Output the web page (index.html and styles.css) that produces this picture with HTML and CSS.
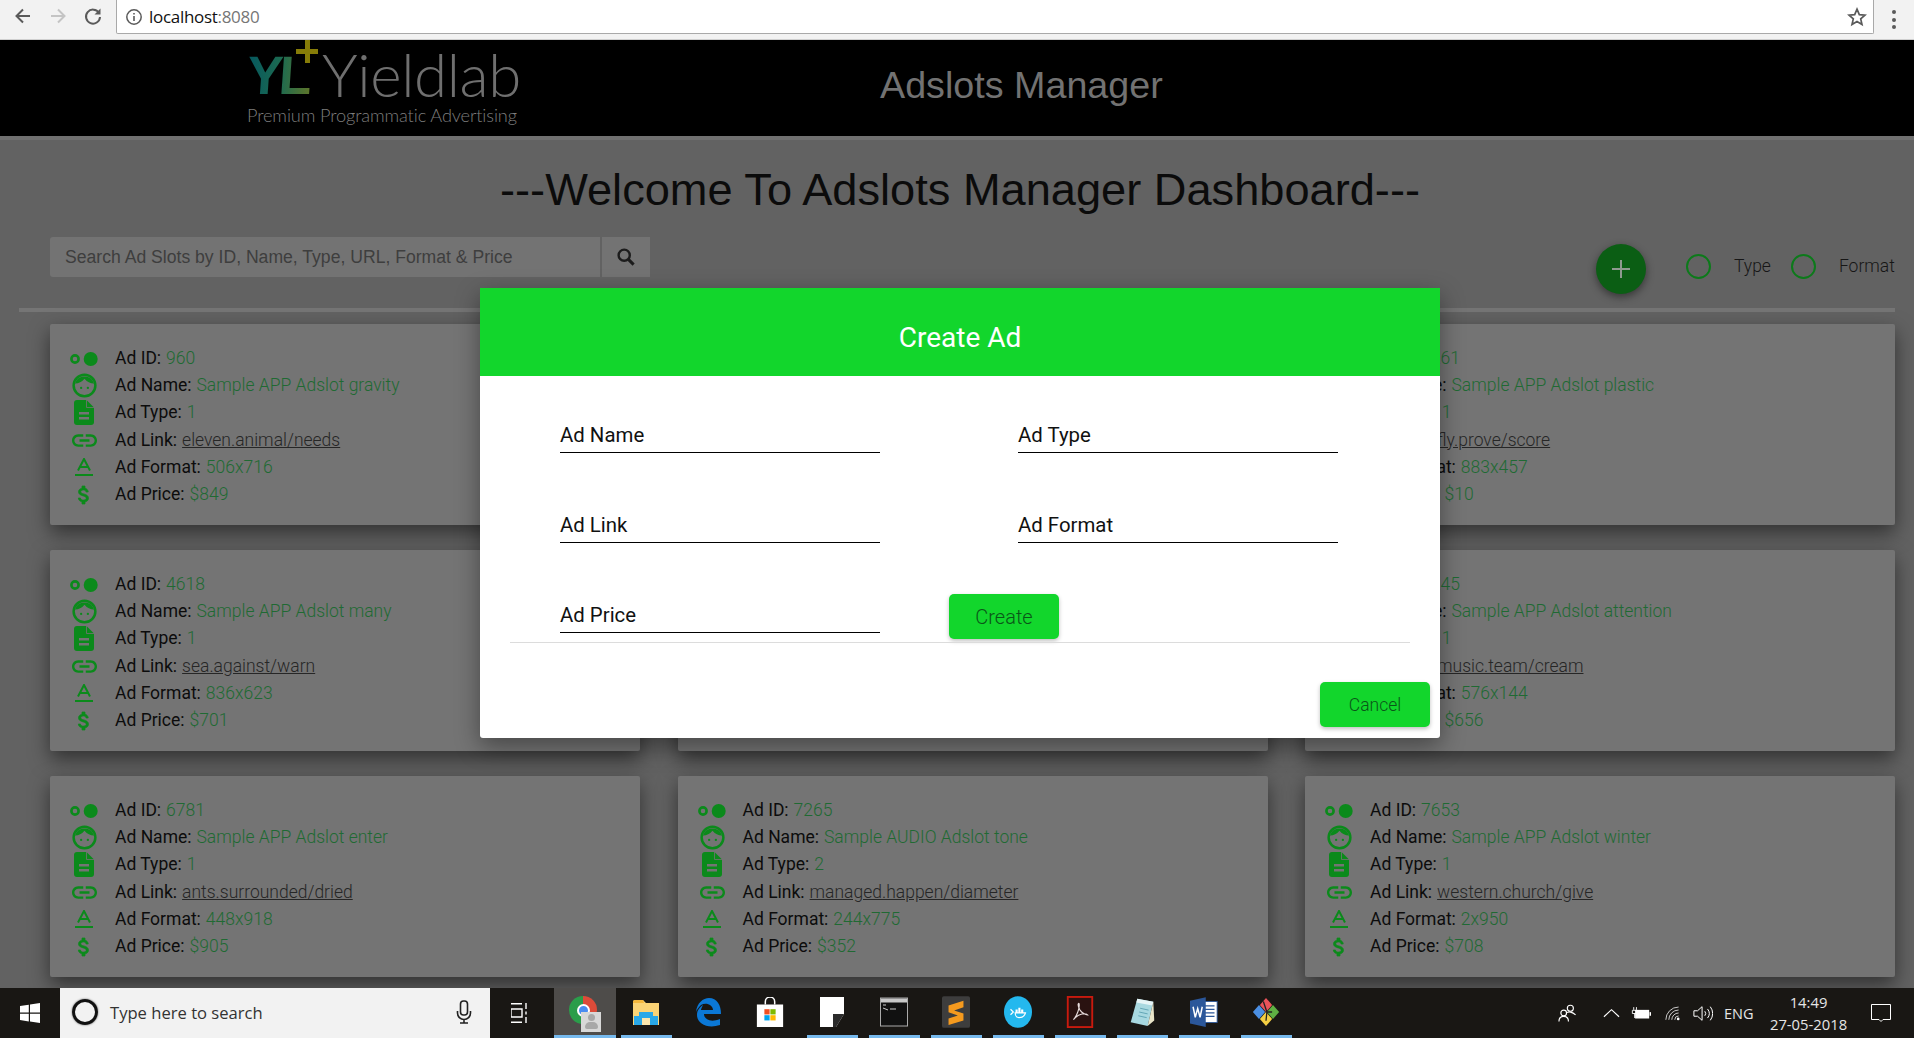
FILE: index.html
```html
<!DOCTYPE html>
<html lang="en">
<head>
<meta charset="utf-8">
<title>Adslots Manager</title>
<link rel="stylesheet" href="styles.css">
</head>
<body>
<svg class="sprite" aria-hidden="true">
  <symbol id="i-id" viewBox="0 0 28 14"><circle cx="5" cy="7" r="3.6" fill="none" stroke="currentColor" stroke-width="2.6"/><circle cx="20.7" cy="7" r="7" fill="currentColor"/></symbol>
  <symbol id="i-face" viewBox="0 0 26 26"><circle cx="13" cy="13" r="11.3" fill="none" stroke="currentColor" stroke-width="2.6"/><path d="M3 11A10.5 10.5 0 0 1 23 11Q17 11 13 6Q9 11 3 11z" fill="currentColor"/><circle cx="9.5" cy="15.5" r="1.2" fill="currentColor"/><circle cx="16.5" cy="15.5" r="1.2" fill="currentColor"/></symbol>
  <symbol id="i-file" viewBox="0 0 20 25"><path d="M3 0H12.5L20 7.5V22a3 3 0 0 1-3 3H3a3 3 0 0 1-3-3V3a3 3 0 0 1 3-3z" fill="currentColor"/><path d="M12.5 0V7.5H20" fill="none" stroke="#747474" stroke-width=".8"/><path d="M5 13.2H15M5 18.2H15" stroke="#747474" stroke-width="2.4"/></symbol>
  <symbol id="i-link" viewBox="2 6 20 12"><path fill="currentColor" d="M3.9 12c0-1.71 1.39-3.1 3.1-3.1h4V7H7c-2.76 0-5 2.24-5 5s2.24 5 5 5h4v-1.9H7c-1.71 0-3.1-1.39-3.1-3.1zM8 13h8v-2H8v2zm9-6h-4v1.9h4c1.71 0 3.1 1.39 3.1 3.1s-1.39 3.1-3.1 3.1h-4V17h4c2.76 0 5-2.24 5-5s-2.24-5-5-5z"/></symbol>
  <symbol id="i-format" viewBox="0 0 18 18"><path d="M3 12.5L9 1L15 12.5M5 9H13" fill="none" stroke="currentColor" stroke-width="2"/><path d="M0 17H18" stroke="currentColor" stroke-width="2"/></symbol>
  <symbol id="i-price" viewBox="5 2 14 20"><path fill="currentColor" stroke="currentColor" stroke-width=".7" d="M11.8 10.9c-2.27-.59-3-1.2-3-2.15 0-1.09 1.01-1.85 2.7-1.85 1.78 0 2.44.85 2.5 2.1h2.21c-.07-1.72-1.12-3.3-3.21-3.81V3h-3v2.16c-1.94.42-3.5 1.68-3.5 3.61 0 2.31 1.91 3.46 4.7 4.13 2.5.6 3 1.48 3 2.41 0 .69-.49 1.79-2.7 1.79-2.06 0-2.87-.92-2.98-2.1h-2.2c.12 2.19 1.76 3.42 3.68 3.83V21h3v-2.15c1.95-.37 3.5-1.5 3.5-3.55 0-2.84-2.43-3.81-4.7-4.4z"/></symbol>
</svg>

<div class="browser">
  <div class="nav-icons">
    <svg class="nav-icon" viewBox="0 0 20 20"><path d="M17 10H4M10 3.5L3.5 10L10 16.5" fill="none" stroke="#5a5a5a" stroke-width="2"/></svg>
    <svg class="nav-icon" viewBox="0 0 20 20"><path d="M3 10H16M10 3.5L16.5 10L10 16.5" fill="none" stroke="#c4c4c4" stroke-width="2"/></svg>
    <svg class="nav-icon" viewBox="0 0 20 20"><path d="M16 7A7 7 0 1 0 17 11" fill="none" stroke="#5a5a5a" stroke-width="2"/><path d="M17.5 2.5V8.5H11.5z" fill="#5a5a5a"/></svg>
  </div>
  <div class="urlbar">
    <svg class="info-icon" viewBox="0 0 18 18"><circle cx="9" cy="9" r="7.2" fill="none" stroke="#5a5a5a" stroke-width="1.5"/><path d="M9 8V13M9 5V6.6" stroke="#5a5a5a" stroke-width="1.6"/></svg>
    <span class="url-host">localhost<span class="url-port">:8080</span></span>
    <svg class="star-icon" viewBox="0 0 20 20"><path d="M10 2.2L12.3 7.6L18 8.1L13.7 11.9L15 17.6L10 14.6L5 17.6L6.3 11.9L2 8.1L7.7 7.6z" fill="none" stroke="#5a5a5a" stroke-width="1.7"/></svg>
  </div>
  <div class="menu-dots"><i></i><i></i><i></i></div>
</div>

<header class="app-header">
  <div class="logo">
    <div class="logo-top">
      <span class="logo-mark">YL</span>
      <span class="logo-plus"></span>
      <span class="logo-word">Yieldlab</span>
    </div>
    <div class="logo-tag">Premium Programmatic Advertising</div>
  </div>
  <div class="app-name">Adslots Manager</div>
</header>

<main class="page">
  <h1 class="welcome">---Welcome To Adslots Manager Dashboard---</h1>
  <div class="toolbar">
    <div class="search-field">Search Ad Slots by ID, Name, Type, URL, Format &amp; Price</div>
    <div class="search-btn"><svg class="search-icon" viewBox="0 0 20 20"><circle cx="8.2" cy="8.2" r="5.6" fill="none" stroke="#1c1c1c" stroke-width="2.4"/><path d="M12.4 12.4L17.6 17.6" stroke="#1c1c1c" stroke-width="3"/></svg></div>
    <div class="fab"><svg class="fab-plus" viewBox="0 0 18 18"><path d="M9 0V18M0 9H18" stroke="#8f9a90" stroke-width="2"/></svg></div>
    <span class="radio radio-type"></span><span class="radio-label">Type</span>
    <span class="radio radio-format"></span><span class="radio-label">Format</span>
  </div>
  <div class="rule"></div>

  <section class="cards">
    <article class="card">
      <div class="r"><svg class="ic w28"><use href="#i-id"/></svg><b>Ad ID:</b> <em>960</em></div>
      <div class="r"><svg class="ic w25"><use href="#i-face"/></svg><b>Ad Name:</b> <em>Sample APP Adslot gravity</em></div>
      <div class="r"><svg class="ic w20"><use href="#i-file"/></svg><b>Ad Type:</b> <em>1</em></div>
      <div class="r"><svg class="ic wl"><use href="#i-link"/></svg><b>Ad Link:</b> <a>eleven.animal/needs</a></div>
      <div class="r"><svg class="ic w18"><use href="#i-format"/></svg><b>Ad Format:</b> <em>506x716</em></div>
      <div class="r"><svg class="ic wp"><use href="#i-price"/></svg><b>Ad Price:</b> <em>$849</em></div>
    </article>
    <article class="card"></article>
    <article class="card">
      <div class="r"><svg class="ic w28"><use href="#i-id"/></svg><b>Ad ID:</b> <em>5261</em></div>
      <div class="r"><svg class="ic w25"><use href="#i-face"/></svg><b>Ad Name:</b> <em>Sample APP Adslot plastic</em></div>
      <div class="r"><svg class="ic w20"><use href="#i-file"/></svg><b>Ad Type:</b> <em>1</em></div>
      <div class="r"><svg class="ic wl"><use href="#i-link"/></svg><b>Ad Link:</b> <a>fly.prove/score</a></div>
      <div class="r"><svg class="ic w18"><use href="#i-format"/></svg><b>Ad Format:</b> <em>883x457</em></div>
      <div class="r"><svg class="ic wp"><use href="#i-price"/></svg><b>Ad Price:</b> <em>$10</em></div>
    </article>
    <article class="card">
      <div class="r"><svg class="ic w28"><use href="#i-id"/></svg><b>Ad ID:</b> <em>4618</em></div>
      <div class="r"><svg class="ic w25"><use href="#i-face"/></svg><b>Ad Name:</b> <em>Sample APP Adslot many</em></div>
      <div class="r"><svg class="ic w20"><use href="#i-file"/></svg><b>Ad Type:</b> <em>1</em></div>
      <div class="r"><svg class="ic wl"><use href="#i-link"/></svg><b>Ad Link:</b> <a>sea.against/warn</a></div>
      <div class="r"><svg class="ic w18"><use href="#i-format"/></svg><b>Ad Format:</b> <em>836x623</em></div>
      <div class="r"><svg class="ic wp"><use href="#i-price"/></svg><b>Ad Price:</b> <em>$701</em></div>
    </article>
    <article class="card"></article>
    <article class="card">
      <div class="r"><svg class="ic w28"><use href="#i-id"/></svg><b>Ad ID:</b> <em>1245</em></div>
      <div class="r"><svg class="ic w25"><use href="#i-face"/></svg><b>Ad Name:</b> <em>Sample APP Adslot attention</em></div>
      <div class="r"><svg class="ic w20"><use href="#i-file"/></svg><b>Ad Type:</b> <em>1</em></div>
      <div class="r"><svg class="ic wl"><use href="#i-link"/></svg><b>Ad Link:</b> <a>music.team/cream</a></div>
      <div class="r"><svg class="ic w18"><use href="#i-format"/></svg><b>Ad Format:</b> <em>576x144</em></div>
      <div class="r"><svg class="ic wp"><use href="#i-price"/></svg><b>Ad Price:</b> <em>$656</em></div>
    </article>
    <article class="card">
      <div class="r"><svg class="ic w28"><use href="#i-id"/></svg><b>Ad ID:</b> <em>6781</em></div>
      <div class="r"><svg class="ic w25"><use href="#i-face"/></svg><b>Ad Name:</b> <em>Sample APP Adslot enter</em></div>
      <div class="r"><svg class="ic w20"><use href="#i-file"/></svg><b>Ad Type:</b> <em>1</em></div>
      <div class="r"><svg class="ic wl"><use href="#i-link"/></svg><b>Ad Link:</b> <a>ants.surrounded/dried</a></div>
      <div class="r"><svg class="ic w18"><use href="#i-format"/></svg><b>Ad Format:</b> <em>448x918</em></div>
      <div class="r"><svg class="ic wp"><use href="#i-price"/></svg><b>Ad Price:</b> <em>$905</em></div>
    </article>
    <article class="card">
      <div class="r"><svg class="ic w28"><use href="#i-id"/></svg><b>Ad ID:</b> <em>7265</em></div>
      <div class="r"><svg class="ic w25"><use href="#i-face"/></svg><b>Ad Name:</b> <em>Sample AUDIO Adslot tone</em></div>
      <div class="r"><svg class="ic w20"><use href="#i-file"/></svg><b>Ad Type:</b> <em>2</em></div>
      <div class="r"><svg class="ic wl"><use href="#i-link"/></svg><b>Ad Link:</b> <a>managed.happen/diameter</a></div>
      <div class="r"><svg class="ic w18"><use href="#i-format"/></svg><b>Ad Format:</b> <em>244x775</em></div>
      <div class="r"><svg class="ic wp"><use href="#i-price"/></svg><b>Ad Price:</b> <em>$352</em></div>
    </article>
    <article class="card">
      <div class="r"><svg class="ic w28"><use href="#i-id"/></svg><b>Ad ID:</b> <em>7653</em></div>
      <div class="r"><svg class="ic w25"><use href="#i-face"/></svg><b>Ad Name:</b> <em>Sample APP Adslot winter</em></div>
      <div class="r"><svg class="ic w20"><use href="#i-file"/></svg><b>Ad Type:</b> <em>1</em></div>
      <div class="r"><svg class="ic wl"><use href="#i-link"/></svg><b>Ad Link:</b> <a>western.church/give</a></div>
      <div class="r"><svg class="ic w18"><use href="#i-format"/></svg><b>Ad Format:</b> <em>2x950</em></div>
      <div class="r"><svg class="ic wp"><use href="#i-price"/></svg><b>Ad Price:</b> <em>$708</em></div>
    </article>
  </section>
</main>

<footer class="taskbar">
  <div class="start"><svg class="win-logo" viewBox="0 0 20 20"><path fill="#fff" d="M0 3L8.8 1.7V9.5H0zM10 1.5L20 0V9.5H10zM0 10.7H8.8V18.4L0 17zM10 10.7H20V20L10 18.5z"/></svg></div>
  <div class="task-search">
    <span class="cortana"></span>
    <span class="task-search-text">Type here to search</span>
    <svg class="mic" viewBox="0 0 16 24"><rect x="4.5" y="1" width="7" height="14" rx="3" fill="none" stroke="#222" stroke-width="1.6"/><path d="M1.5 11V13A6.5 6.5 0 0 0 14.5 13V11M8 19.5V23M4 23H12" fill="none" stroke="#222" stroke-width="1.6"/></svg>
  </div>
  <div class="task-view"><svg class="tv-icon" viewBox="0 0 20 20"><path d="M0 .7H11M0 19.3H11M0 6H11V14H0zM15 0V6M15 14V20M15 8.5V11.5" fill="none" stroke="#fff" stroke-width="1.4"/></svg></div>
  <div class="task-item active"><span class="chrome-ball"><span class="chrome-core"></span></span><span class="chrome-badge"><span class="badge-head"></span><span class="badge-body"></span></span></div>
  <div class="task-item open"><svg class="app" viewBox="0 0 28 30"><path d="M1 5a2 2 0 0 1 2-2H11L14 6H27V28H1z" fill="#fbd476"/><path d="M1 5a2 2 0 0 1 2-2H11L12 6H1z" fill="#f5b83d"/><path d="M7 15H21V19H26V28H2V19H7z" fill="#29a8e8"/><path d="M10 21H18V28H10z" fill="#fbe6ad"/></svg></div>
  <div class="task-item"><svg class="app" viewBox="0 0 28 30"><path d="M2 15C3 6 9 1 15 1C23 1 27 8 27 17H10C10 22 16 26 26 22V28C14 32 3 27 3 18C3 13 6 10 9 8C8 10 7 12 7 13H19C19 8 12 5 7 8C5 10 3 12 2 15z" fill="#0b78d6"/></svg></div>
  <div class="task-item"><svg class="app" viewBox="0 0 28 32"><path d="M9 8V5A5 5 0 0 1 19 5V8" fill="none" stroke="#fff" stroke-width="1.6"/><rect y="8" width="28" height="24" fill="#fff"/><rect x="8" y="13" width="5.6" height="5.6" fill="#f25022"/><rect x="14.4" y="13" width="5.6" height="5.6" fill="#7fba00"/><rect x="8" y="19.4" width="5.6" height="5.6" fill="#00a4ef"/><rect x="14.4" y="19.4" width="5.6" height="5.6" fill="#ffb900"/></svg></div>
  <div class="task-item open"><svg class="app" viewBox="0 0 24 30"><path d="M0 0H24V30H0z" fill="#fff"/><path d="M24 14V17L16 30H13V17H24z" fill="#2b2b2b"/><path d="M24 17V30H16z" fill="#191714"/></svg></div>
  <div class="task-item open"><svg class="app" viewBox="0 0 28 30"><rect x=".5" y="1" width="27" height="28" fill="#111" stroke="#aaa"/><rect x="1" y="1.5" width="26" height="4" fill="#c8c8c8"/><path d="M3 8H6M3 11L8 13M10 12H16" stroke="#ccc"/></svg></div>
  <div class="task-item open"><svg class="app-lg" viewBox="0 0 30 34"><rect width="30" height="34" rx="2" fill="#3d3d3d"/><path d="M23 5V12L13 15.4L23 18.6V26L7 31V24L17 20.7L7 17.4V10z" fill="#f59a1e"/></svg></div>
  <div class="task-item open"><svg class="app-lg" viewBox="0 0 30 34"><ellipse cx="15" cy="17" rx="15" ry="17" fill="#24b8ee"/><path d="M7 14L10 17L7 20M13 15H14V17H13zM16 13H17V17H16zM19 15H20V17H19zM12 18H23C22 22 19 23 16 23C14 23 12 21 12 18z" fill="none" stroke="#fff" stroke-width="1.3"/></svg></div>
  <div class="task-item open"><svg class="app-lg" viewBox="0 0 28 34"><rect x="1" y="1" width="26" height="32" fill="#2a1210" stroke="#c81a0e" stroke-width="2"/><path d="M7 25C11 21 14 12 13 8C12 7 11 10 14 15C16 18 20 20 22 20C20 18 13 18 7 25z" fill="none" stroke="#e8dcdc" stroke-width="1.2"/></svg></div>
  <div class="task-item open"><svg class="app-lg" viewBox="0 0 28 34"><path d="M9 3L26 6L20 32L2 28z" fill="#a8d8e0"/><path d="M9 3L26 6L25 10L8 7z" fill="#e6f4f6"/><path d="M12 13L21 15M11 17L20 19M10 21L19 23" stroke="#5fa3b3"/><path d="M20 32L26 6L27 26z" fill="#e8e4c8"/></svg></div>
  <div class="task-item open"><svg class="app-lg" viewBox="0 0 32 34"><rect x="13" y="5" width="18" height="24" fill="#fff" stroke="#2b579a"/><path d="M17 10H28M17 14H28M17 18H28M17 22H28" stroke="#2b579a" stroke-width="1.6"/><path d="M0 4L18 0V34L0 30z" fill="#2b579a"/><path d="M3.5 11L6 23L8.8 13L11.5 23L14 11" fill="none" stroke="#fff" stroke-width="1.7"/></svg></div>
  <div class="task-item open"><svg class="app-lg" viewBox="0 0 32 34"><path d="M16 1L23 9L16 17L9 9z" fill="#e9535a"/><path d="M24 9L31 17L24 25L17 17z" fill="#5fb043"/><path d="M16 17L23 25L16 33L9 25z" fill="#f4cf43"/><path d="M8 9L15 17L8 25L1 17z" fill="#4b8fe2"/><path d="M13 5L17 17L23 17M17 17L16 27" fill="none" stroke="#222" stroke-width="1.5"/></svg></div>
  <div class="tray">
    <svg class="tray-icon tray-people" viewBox="0 0 20 20"><circle cx="13" cy="5" r="3.2" fill="none" stroke="#fff" stroke-width="1.2"/><circle cx="6" cy="10" r="3" fill="none" stroke="#fff" stroke-width="1.2"/><path d="M1 19C1 15 3 13.5 6 13.5S11 15 11 19M9.5 9.5C11 8.5 15 8.5 18.5 12" fill="none" stroke="#fff" stroke-width="1.2"/></svg>
    <svg class="tray-icon tray-up" viewBox="0 0 18 10"><path d="M1 9L9 1.5L17 9" fill="none" stroke="#fff" stroke-width="1.2"/></svg>
    <svg class="tray-icon tray-batt" viewBox="0 0 22 14"><path d="M3 0V3M6 0V3M1.5 3.5H7V7H1.5z" fill="none" stroke="#fff"/><path d="M4 7V12" stroke="#fff"/><rect x="4.5" y="3" width="15.5" height="9.5" fill="#fff"/><rect x="20.4" y="5.5" width="1.6" height="4" fill="#fff"/></svg>
    <svg class="tray-icon tray-wifi" viewBox="0 0 20 18"><path d="M1 17A15 15 0 0 1 16 2M4.5 17A11.5 11.5 0 0 1 16 5.5M8 17A8 8 0 0 1 16 9M11.5 17A4.5 4.5 0 0 1 16 12.5" fill="none" stroke="#e8e8e8"/><circle cx="15.5" cy="16" r="1.6" fill="#fff"/></svg>
    <svg class="tray-icon tray-vol" viewBox="0 0 22 18"><path d="M1 6H5L10 1.5V16.5L5 12H1z" fill="none" stroke="#fff" stroke-width="1.1"/><path d="M13 6.5A4 4 0 0 1 13 11.5M16 4A8 8 0 0 1 16 14M19 1.5A12 12 0 0 1 19 16.5" fill="none" stroke="#fff" stroke-width="1.1"/></svg>
    <span class="lang">ENG</span>
    <div class="clock"><span>14:49</span><span>27-05-2018</span></div>
    <svg class="tray-icon tray-note" viewBox="0 0 20 19"><path d="M.5 .5H19.5V15.500H12L10 17.5L8 15.5H.5z" fill="none" stroke="#fff"/></svg>
  </div>
</footer>

<div class="modal">
  <div class="modal-head">Create Ad</div>
  <div class="modal-fields">
    <label class="field">Ad Name</label>
    <label class="field">Ad Type</label>
    <label class="field">Ad Link</label>
    <label class="field">Ad Format</label>
    <div class="field-row">
      <label class="field">Ad Price</label>
      <button class="btn btn-create">Create</button>
    </div>
  </div>
  <div class="modal-rule"></div>
  <div class="modal-foot"><button class="btn btn-cancel">Cancel</button></div>
</div>
</body>
</html>
```
FILE: styles.css
```css
* { box-sizing: border-box; }
html, body { margin: 0; height: 100%; }
body {
  width: 1914px; height: 1038px; overflow: hidden; position: relative;
  display: flex; flex-direction: column;
  background: #626262; font-family: Roboto, "Liberation Sans", sans-serif;
}
.sprite { display: none; }

/* browser chrome */
.browser { height: 40px; flex: none; display: flex; background: #f2f2f2; border-bottom: 1px solid #cfcfcf; }
.nav-icons { width: 116px; display: flex; padding: 6px 0 0 13px; gap: 15px; }
.nav-icon { width: 20px; height: 20px; }
.urlbar {
  width: 1758px; height: 34px; background: #fff; display: flex; align-items: center;
  border: 1px solid #a9a9a9; border-top: 0; border-radius: 0 0 2px 2px; padding: 0 6px 0 8px;
}
.info-icon { width: 18px; height: 18px; }
.url-host { margin-left: 6px; font: 17px "Open Sans", sans-serif; letter-spacing: -.3px; color: #111; }
.url-port { color: #767676; }
.star-icon { width: 20px; height: 20px; margin-left: auto; margin-right: 0; }
.menu-dots { flex: 1; display: flex; flex-direction: column; align-items: center; gap: 3.5px; padding-top: 10px; }
.menu-dots i { width: 4px; height: 4px; border-radius: 50%; background: #5a5a5a; }

/* app header */
.app-header { height: 100px; flex: none; background: #000; border-bottom: 4px solid #707070; position: relative; display: flex; }
.logo { width: 300px; margin-left: 247px; }
.logo-top { height: 64px; display: flex; align-items: flex-end; position: relative; }
.logo-mark {
  font: 700 54px/58px "Liberation Sans", sans-serif; letter-spacing: -4px; width: 75px; transform: skewX(-4deg);
  background: linear-gradient(90deg, #05585f, #1d6a50 45%, #74791c); -webkit-background-clip: text; background-clip: text; color: transparent;
}
.logo-plus { position: absolute; left: 49px; top: 0; width: 22px; height: 23px;
  background: linear-gradient(#867c08, #867c08) center/100% 5px no-repeat, linear-gradient(#867c08, #867c08) center/5px 100% no-repeat; }
.logo-word { font: 300 60px/60px Lato, sans-serif; letter-spacing: -.4px; color: #6f6f6f; }
.logo-tag { font: 300 18.2px/22px Lato, sans-serif; color: #7d7d7d; margin-top: 0; white-space: nowrap; letter-spacing: -.12px; }
.app-name { margin-left: 333px; font: 37.7px/74px "Liberation Sans", sans-serif; color: #727272; padding-top: 8px; white-space: nowrap; }

/* page */
.page { flex: 1; min-height: 0; overflow: hidden; }
.welcome { margin: 23px 0 0; text-align: center; font: 400 45.2px/53px "Liberation Sans", sans-serif; color: #0b0b0b; padding-left: 6px; }
.toolbar { margin-top: 21px; height: 71px; display: flex; align-items: flex-start; padding-left: 50px; }
.search-field {
  width: 550px; height: 40px; background: #737373; border-radius: 3px 0 0 3px; padding-left: 15px;
  font: 17.6px/40px "Liberation Sans", sans-serif; color: #3e3e3e;
}
.search-btn { margin-left: 2px; width: 48px; height: 40px; background: #737373; display: flex; align-items: center; justify-content: center; }
.search-icon { width: 20px; height: 20px; }
.fab {
  margin: 7px 0 0 946px; width: 50px; height: 50px; border-radius: 50%; background: #0b5e14;
  box-shadow: 0 3px 8px rgba(0,0,0,.45); display: flex; align-items: center; justify-content: center;
}
.fab-plus { width: 18px; height: 18px; }
.radio { width: 25px; height: 25px; margin-top: 17px; border-radius: 50%; border: 2.5px solid #0c7a1a; }
.radio-type { margin-left: 40px; }
.radio-format { margin-left: 20px; }
.radio-label { margin: 17px 0 0 23px; font: 300 17.5px/25px Roboto, sans-serif; color: #161616; }
.rule { margin: 0 19px; height: 4px; background: #757575; }

.cards {
  margin-top: 12px; padding: 0 19px 0 50px;
  display: grid; grid-template-columns: repeat(3, 590px); column-gap: 37.5px; row-gap: 25px;
}
.card {
  height: 201px; background: #747474; border-radius: 2px; padding: 21px 0 17px 20px;
  box-shadow: 0 8px 20px rgba(0,0,0,.5);
}
.r { height: 27.2px; display: grid; grid-template-columns: 40px auto auto 1fr; column-gap: 5px; align-items: center; justify-content: start; font-size: 17.5px; font-weight: 300; line-height: 27px; white-space: nowrap; }
.r b { font-weight: 400; color: #0c0c0c; }
.r em { font-style: normal; color: #1f6a33; }
.r a { color: #262626; text-decoration: underline; }
.ic { color: #0b8a1b; display: block; justify-self: start; overflow: visible; }
.w28 { width: 28px; height: 14px; }
.w25 { width: 25px; height: 25px; margin-left: 2px; }
.w20 { width: 20px; height: 25px; margin-left: 4px; }
.wl  { width: 25px; height: 15px; margin-left: 2px; }
.w18 { width: 18px; height: 18px; margin-left: 5px; }
.wp  { width: 14px; height: 20px; margin-left: 7px; }

/* modal */
.modal {
  position: absolute; left: 480px; top: 288px; width: 960px; height: 450px; background: #fff;
  border-radius: 0 0 3px 3px; box-shadow: 0 8px 24px rgba(0,0,0,.4); display: flex; flex-direction: column;
}
.modal-head { height: 88px; flex: none; padding-top: 10px; background: #12d62c; color: #fff; display: flex; align-items: center; justify-content: center; font: 400 28px Roboto, sans-serif; }
.modal-fields { padding: 47px 0 0 80px; display: grid; grid-template-columns: 320px 320px; column-gap: 138px; row-gap: 60px; }
.field { display: block; height: 30px; border-bottom: 1px solid #000; font: 400 20.4px/24px Roboto, sans-serif; color: #111; }
.field-row { grid-column: 1 / -1; height: 45px; margin-top: -9px; display: flex; align-items: flex-end; }
.field-row .field { width: 320px; margin-bottom: 6px; }
.btn {
  width: 110px; height: 45px; border: 0; border-radius: 5px; background: #12d62c; color: #0a5518;
  font: 300 20px Roboto, sans-serif; box-shadow: 0 2px 4px rgba(0,0,0,.25); padding: 0;
}
.btn-create { margin-left: 69px; }
.btn-cancel { font-size: 17.5px; }
.modal-rule { margin: 3px 30px 0; height: 1px; background: #dcdcdc; flex: none; }
.modal-foot { display: flex; justify-content: flex-end; padding: 39px 10px 0 0; }

/* taskbar */
.taskbar { height: 50px; flex: none; background: #191714; display: flex; color: #fff; position: relative; }
.start { width: 60px; display: flex; align-items: center; justify-content: center; }
.win-logo { width: 20px; height: 20px; }
.task-search { width: 430px; background: #f2f2f2; display: flex; align-items: center; padding: 0 18px 2px 12px; }
.cortana { width: 26px; height: 26px; border-radius: 50%; border: 3px solid #111; box-shadow: 0 0 2px #555; }
.task-search-text { margin-left: 12px; font: 16.6px "Open Sans", sans-serif; color: #333; }
.mic { width: 16px; height: 24px; margin-left: auto; }
.task-view { width: 64px; padding-right: 2px; display: flex; align-items: center; justify-content: center; }
.tv-icon { width: 20px; height: 20px; }
.task-item { width: 62px; position: relative; display: flex; align-items: center; justify-content: center; padding: 0 3px 2px 0; }
.task-item.active { background: #4e4c4a; box-shadow: inset 0 -3px #76b9ed; padding-right: 0; }
.task-item.open::after { content: ""; position: absolute; left: 5px; right: 6px; bottom: 0; height: 3px; background: #76b9ed; }
.app { width: 28px; height: 30px; }
.app-lg { width: 28px; height: 32px; }
.chrome-ball {
  width: 28px; height: 28px; border-radius: 50%; display: flex; align-items: center; justify-content: center;
  background: conic-gradient(#dd4b39 0 120deg, #f4c20d 120deg 170deg, #2a9d4a 170deg 360deg);
  margin: -4px 4px 0 0;
}
.chrome-core { width: 13px; height: 13px; border-radius: 50%; background: #4a8cf0; border: 2px solid #fff; }
.chrome-badge { position: absolute; left: 27px; top: 24px; width: 20px; height: 20px; background: #d8d8d8; display: flex; flex-direction: column; align-items: center; padding-top: 2px; }
.badge-head { width: 7px; height: 7px; border-radius: 50%; background: #a8a8a8; }
.badge-body { width: 13px; height: 7px; margin-top: 1px; border-radius: 5px 5px 2px 2px; background: #a8a8a8; }
.tray { margin-left: auto; width: 374px; display: flex; align-items: center; }
.tray-icon { display: block; }
.tray-people { width: 19px; height: 20px; margin-left: 18px; }
.tray-up { width: 17px; height: 10px; margin-left: 26px; }
.tray-batt { width: 20px; height: 13px; margin-left: 11px; }
.tray-wifi { width: 17px; height: 16px; margin-left: 14px; }
.tray-vol { width: 20px; height: 17px; margin-left: 11px; }
.lang { margin-left: 11px; font: 14.5px "Open Sans", sans-serif; color: #e6e6e6; }
.clock { margin-left: 15px; width: 80px; display: flex; flex-direction: column; align-items: center; gap: 3px; font: 14.8px/19px "Open Sans", sans-serif; color: #e6e6e6; white-space: nowrap; }
.tray-note { width: 20px; height: 19px; margin-left: 22px; }
```
